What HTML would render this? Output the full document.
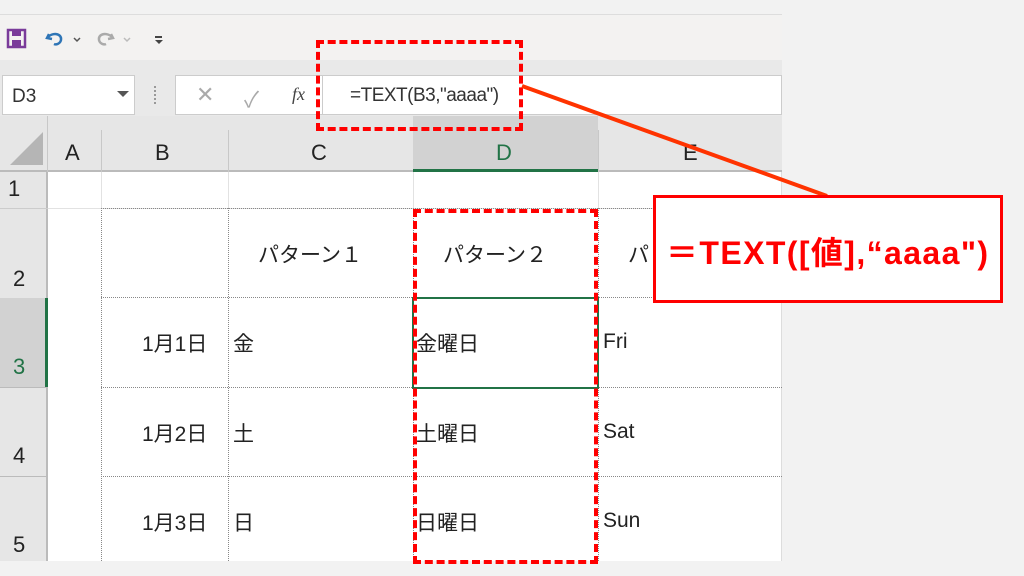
<!DOCTYPE html>
<html><head><meta charset="utf-8"><style>
*{margin:0;padding:0;box-sizing:border-box}
body{width:1024px;height:576px;background:#f2f2f2;position:relative;overflow:hidden;font-family:"Liberation Sans","Noto Sans CJK JP",sans-serif;color:#222}
.a{position:absolute}
.t{position:absolute;font-size:21px;white-space:nowrap}
</style></head><body>
<div class="a" style="left:0;top:14px;width:782px;height:547px;background:#fff;border-right:1px solid #ddd"></div>
<div class="a" style="left:0;top:14px;width:782px;height:46px;background:#f3f2f1;border-top:1px solid #ddd"></div>
<div class="a" style="left:0;top:60px;width:782px;height:56px;background:#e9e9e9"></div>
<svg class="a" style="left:6px;top:28px" width="22" height="22" viewBox="0 0 22 22"><rect x="2" y="2" width="17" height="17" fill="none" stroke="#7a3b9a" stroke-width="2.5"/><rect x="6" y="3" width="9" height="5" fill="#7a3b9a"/><rect x="6" y="12" width="9" height="6" fill="#7a3b9a"/></svg>
<svg class="a" style="left:44px;top:28px" width="40" height="22" viewBox="0 0 40 22"><path d="M5 6 L3 10 L8 11 M3 10 C8 4 18 5 17 12 C16 16 12 17 10 16" fill="none" stroke="#2e75b6" stroke-width="2.5"/><path d="M30 10 l3 3 l3 -3" fill="none" stroke="#555" stroke-width="1.5"/></svg>
<svg class="a" style="left:94px;top:28px" width="44" height="22" viewBox="0 0 44 22"><path d="M17 6 L19 10 L14 11 M19 10 C14 4 4 5 5 12 C6 16 10 17 12 16" fill="none" stroke="#aaa" stroke-width="2.5"/><path d="M30 10 l3 3 l3 -3" fill="none" stroke="#bbb" stroke-width="1.5"/></svg>
<div class="a" style="left:155px;top:36px;width:7px;height:2px;background:#444"></div>
<svg class="a" style="left:154px;top:39px" width="10" height="6"><path d="M1 1 L5 5 L9 1Z" fill="#444"/></svg>
<div class="a" style="left:2px;top:75px;width:133px;height:40px;background:#fff;border:1px solid #ccc"></div>
<div class="t" style="left:12px;top:86px;font-size:19px;color:#333">D3</div>
<svg class="a" style="left:117px;top:91px" width="12" height="7"><path d="M0 0 L12 0 L6 6Z" fill="#555"/></svg>
<div class="a" style="left:154px;top:86px;width:2px;height:18px;border-left:2px dotted #999"></div>
<div class="a" style="left:175px;top:75px;width:152px;height:40px;background:#fff;border:1px solid #ccc"></div>
<div class="t" style="left:196px;top:82px;font-size:22px;color:#aaa">✕</div>
<div class="t" style="left:244px;top:82px;font-size:22px;color:#aaa">✓</div>
<div class="t" style="left:292px;top:84px;font-size:18px;font-style:italic;font-family:'Liberation Serif',serif;color:#444">fx</div>
<div class="a" style="left:322px;top:75px;width:460px;height:40px;background:#fff;border:1px solid #ccc"></div>
<div class="t" style="left:350px;top:85px;font-size:19px;color:#333;letter-spacing:-0.5px">=TEXT(B3,"aaaa")</div>
<div class="a" style="left:0;top:116px;width:782px;height:56px;background:#e6e6e6;border-bottom:2px solid #bbb"></div>
<svg class="a" style="left:10px;top:132px" width="34" height="34"><path d="M33 0 L33 33 L0 33Z" fill="#b5b5b5"/></svg>
<div class="a" style="left:413px;top:116px;width:185px;height:56px;background:#d2d2d2;border-bottom:3px solid #217346"></div>
<div class="a" style="left:47px;top:116px;width:1px;height:56px;background:#c8c8c8"></div>
<div class="a" style="left:101px;top:130px;width:1px;height:42px;background:#c8c8c8"></div>
<div class="a" style="left:228px;top:130px;width:1px;height:42px;background:#c8c8c8"></div>
<div class="a" style="left:598px;top:130px;width:1px;height:42px;background:#c8c8c8"></div>
<div class="t" style="left:65px;top:140px;font-size:22px">A</div>
<div class="t" style="left:155px;top:140px;font-size:22px">B</div>
<div class="t" style="left:311px;top:140px;font-size:22px">C</div>
<div class="t" style="left:496px;top:140px;font-size:22px;color:#217346">D</div>
<div class="t" style="left:683px;top:140px;font-size:22px">E</div>
<div class="a" style="left:0;top:172px;width:48px;height:389px;background:#e6e6e6;border-right:2px solid #bbb"></div>
<div class="a" style="left:0;top:298px;width:48px;height:90px;background:#d2d2d2;border-right:3px solid #217346"></div>
<div class="a" style="left:0;top:208px;width:48px;height:1px;background:#ccc"></div>
<div class="a" style="left:0;top:387px;width:48px;height:1px;background:#bbb"></div>
<div class="a" style="left:0;top:476px;width:48px;height:1px;background:#bbb"></div>
<div class="t" style="left:8px;top:176px;font-size:22px">1</div>
<div class="t" style="left:13px;top:266px;font-size:22px">2</div>
<div class="t" style="left:13px;top:354px;font-size:22px;color:#217346">3</div>
<div class="t" style="left:13px;top:443px;font-size:22px">4</div>
<div class="t" style="left:13px;top:532px;font-size:22px">5</div>
<div class="a" style="left:48px;top:208px;width:734px;height:1px;background:#e2e2e2"></div>
<div class="a" style="left:101px;top:208px;width:681px;border-top:1px dotted #888"></div>
<div class="a" style="left:101px;top:297px;width:681px;border-top:1px dotted #888"></div>
<div class="a" style="left:101px;top:387px;width:681px;border-top:1px dotted #888"></div>
<div class="a" style="left:101px;top:476px;width:681px;border-top:1px dotted #888"></div>
<div class="a" style="left:101px;top:208px;height:353px;border-left:1px dotted #888"></div>
<div class="a" style="left:228px;top:208px;height:353px;border-left:1px dotted #888"></div>
<div class="a" style="left:413px;top:208px;height:353px;border-left:1px dotted #888"></div>
<div class="a" style="left:598px;top:208px;height:353px;border-left:1px dotted #888"></div>
<div class="a" style="left:228px;top:172px;height:36px;width:1px;background:#e2e2e2"></div>
<div class="a" style="left:413px;top:172px;height:36px;width:1px;background:#e2e2e2"></div>
<div class="a" style="left:598px;top:172px;height:36px;width:1px;background:#e2e2e2"></div>
<div class="a" style="left:101px;top:172px;height:36px;width:1px;background:#e2e2e2"></div>
<div class="a" style="left:412px;top:297px;width:187px;height:92px;border:2px solid #217346"></div>
<div class="t" style="left:258px;top:239px">パターン１</div>
<div class="t" style="left:443px;top:239px">パターン２</div>
<div class="t" style="left:628px;top:239px">パ</div>
<div class="t" style="left:142px;top:328px">1月1日</div>
<div class="t" style="left:142px;top:418px">1月2日</div>
<div class="t" style="left:142px;top:507px">1月3日</div>
<div class="t" style="left:233px;top:328px">金</div>
<div class="t" style="left:233px;top:418px">土</div>
<div class="t" style="left:233px;top:507px">日</div>
<div class="t" style="left:416px;top:328px">金曜日</div>
<div class="t" style="left:416px;top:418px">土曜日</div>
<div class="t" style="left:416px;top:507px">日曜日</div>
<div class="t" style="left:603px;top:330px">Fri</div>
<div class="t" style="left:603px;top:420px">Sat</div>
<div class="t" style="left:603px;top:509px">Sun</div>
<div class="a" style="left:316px;top:40px;width:207px;height:91px;border:4px dashed #f00"></div>
<div class="a" style="left:413px;top:209px;width:185px;height:355px;border:4px dashed #f00"></div>
<svg class="a" style="left:0;top:0" width="1024" height="576"><line x1="522" y1="86" x2="827" y2="196" stroke="#ff3300" stroke-width="4"/></svg>
<div class="a" style="left:653px;top:195px;width:350px;height:108px;background:#fff;border:3px solid #f00"></div>
<div class="t" style="left:666px;top:228px;font-size:32px;font-weight:bold;color:#f00;letter-spacing:1.4px">＝TEXT([値],“aaaa")</div>
</body></html>
